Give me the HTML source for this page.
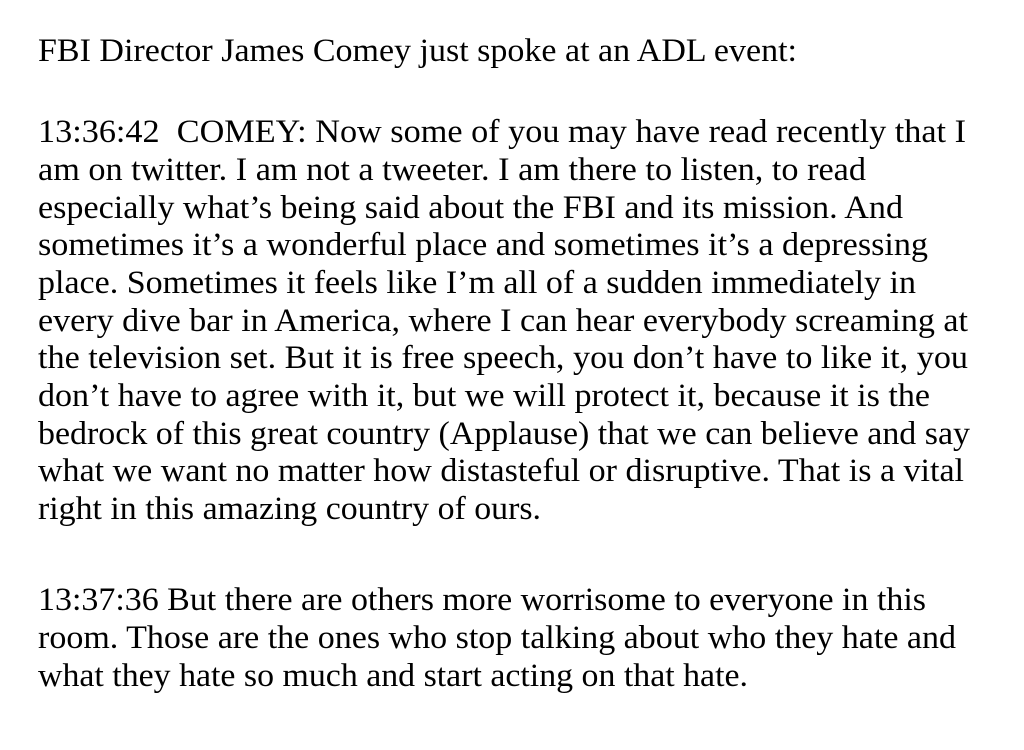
<!DOCTYPE html>
<html><head><meta charset="utf-8"><style>
html,body{margin:0;padding:0;background:#fff;}
svg{display:block;}
text{font-family:"Liberation Serif","Times New Roman",serif;font-size:33px;fill:#000;}
</style></head><body>
<svg width="1024" height="750" xmlns="http://www.w3.org/2000/svg">
<text x="38" y="61" textLength="759" lengthAdjust="spacingAndGlyphs">FBI Director James Comey just spoke at an ADL event:</text>
<text x="38" y="142" textLength="928" lengthAdjust="spacingAndGlyphs" xml:space="preserve">13:36:42  COMEY: Now some of you may have read recently that I</text>
<text x="38" y="180" textLength="828" lengthAdjust="spacingAndGlyphs">am on twitter. I am not a tweeter. I am there to listen, to read</text>
<text x="38" y="218" textLength="865" lengthAdjust="spacingAndGlyphs">especially what’s being said about the FBI and its mission. And</text>
<text x="38" y="255" textLength="890" lengthAdjust="spacingAndGlyphs">sometimes it’s a wonderful place and sometimes it’s a depressing</text>
<text x="38" y="293" textLength="878" lengthAdjust="spacingAndGlyphs">place. Sometimes it feels like I’m all of a sudden immediately in</text>
<text x="38" y="331" textLength="930" lengthAdjust="spacingAndGlyphs">every dive bar in America, where I can hear everybody screaming at</text>
<text x="38" y="368" textLength="930" lengthAdjust="spacingAndGlyphs">the television set. But it is free speech, you don’t have to like it, you</text>
<text x="38" y="406" textLength="892" lengthAdjust="spacingAndGlyphs">don’t have to agree with it, but we will protect it, because it is the</text>
<text x="38" y="444" textLength="932" lengthAdjust="spacingAndGlyphs">bedrock of this great country (Applause) that we can believe and say</text>
<text x="38" y="481" textLength="926" lengthAdjust="spacingAndGlyphs">what we want no matter how distasteful or disruptive. That is a vital</text>
<text x="38" y="519" textLength="503" lengthAdjust="spacingAndGlyphs">right in this amazing country of ours.</text>
<text x="38" y="610" textLength="888" lengthAdjust="spacingAndGlyphs">13:37:36 But there are others more worrisome to everyone in this</text>
<text x="38" y="648" textLength="918" lengthAdjust="spacingAndGlyphs">room. Those are the ones who stop talking about who they hate and</text>
<text x="38" y="686" textLength="710" lengthAdjust="spacingAndGlyphs">what they hate so much and start acting on that hate.</text>
</svg>
</body></html>
